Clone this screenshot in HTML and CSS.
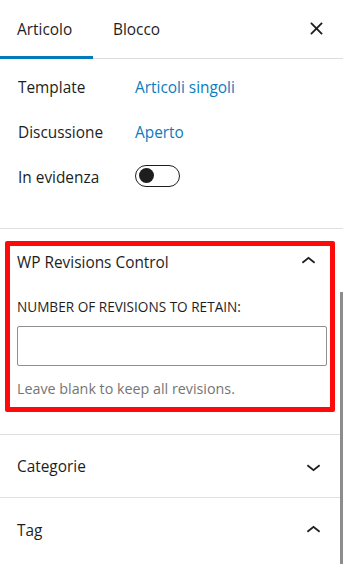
FILE: index.html
```html
<!DOCTYPE html>
<html lang="it">
<head>
<meta charset="utf-8">
<title>Impostazioni</title>
<link rel="stylesheet" href="styles.css">
</head>
<body>
<div class="sidebar">
  <div class="tabs">
    <div class="tab active">Articolo</div>
    <div class="tab second">Blocco</div>
    <div class="close" aria-label="Chiudi">
      <svg width="14" height="14" viewBox="0 0 14 14"><path d="M1 1L13 13M13 1L1 13" stroke="#1e1e1e" stroke-width="2" fill="none"/></svg>
    </div>
  </div>

  <div class="summary">
    <div class="row"><span class="label">Template</span><span class="value">Articoli singoli</span></div>
    <div class="row"><span class="label">Discussione</span><span class="value">Aperto</span></div>
    <div class="row"><span class="label">In evidenza</span><span class="toggle"><span class="knob"></span></span></div>
  </div>

  <div class="panel-section">
    <div class="highlight">
      <div class="panel-header">
        <span>WP Revisions Control</span>
        <svg class="chev" width="29" height="29" viewBox="0 0 24 24"><path d="M6.5 12.4L12 8l5.5 4.4-.9 1.2L12 10l-4.6 3.6-.9-1.2z" fill="#1e1e1e"/></svg>
      </div>
      <div class="field-label">NUMBER OF REVISIONS TO RETAIN:</div>
      <div class="input"></div>
      <div class="help">Leave blank to keep all revisions.</div>
    </div>
  </div>

  <div class="section cat">
    <span>Categorie</span>
    <svg class="chev" width="29" height="29" viewBox="0 0 24 24"><path d="M17.5 11.6L12 16l-5.5-4.4.9-1.2L12 14l4.6-3.6.9 1.2z" fill="#1e1e1e"/></svg>
  </div>
  <div class="section tag">
    <span>Tag</span>
    <svg class="chev" width="29" height="29" viewBox="0 0 24 24"><path d="M6.5 12.4L12 8l5.5 4.4-.9 1.2L12 10l-4.6 3.6-.9-1.2z" fill="#1e1e1e"/></svg>
  </div>
  <div class="scrollbar"></div>
</div>
</body>
</html>
```
FILE: styles.css
```css
html, body {
  margin: 0;
  padding: 0;
  background: #fff;
}
body {
  font-family: "Open Sans", "Noto Sans", sans-serif;
  font-size: 15.4px;
  color: #1e1e1e;
  overflow: hidden;
}
.sidebar {
  position: relative;
  width: 343px;
  height: 564px;
  overflow: hidden;
}
.tabs {
  display: flex;
  align-items: stretch;
  height: 58px;
  border-bottom: 1px solid #dddddd;
}
.tab {
  display: flex;
  align-items: center;
  padding: 0 17px;
  margin-bottom: -1px;
  padding-bottom: 1px;
}
.tab.active {
  width: 59px;
  box-shadow: inset 0 -3px 0 #007cba;
}
.tab.second {
  padding-left: 20px;
}
.close {
  margin-left: auto;
  width: 48px;
  display: flex;
  align-items: center;
  justify-content: center;
  margin-right: 3px;
  padding-bottom: 1px;
}
.close svg {
  width: 13px;
  height: 13px;
}
.summary {
  display: flex;
  flex-direction: column;
  gap: 10px;
  padding: 11px 0 33px 18px;
  border-bottom: 1px solid #e0e0e0;
}
.row {
  display: flex;
  align-items: center;
  height: 35px;
}
.label {
  width: 117px;
  flex: none;
}
.value {
  color: #0a7cc0;
}
.toggle {
  box-sizing: border-box;
  width: 45px;
  height: 22px;
  border: 1.5px solid #1e1e1e;
  border-radius: 11px;
  display: flex;
  align-items: center;
  padding-left: 3px;
  margin-top: -4px;
}
.knob {
  width: 15px;
  height: 15px;
  border-radius: 50%;
  background: #1e1e1e;
}
.panel-section {
  padding: 12px 8px 22px 5px;
  border-bottom: 1px solid #e0e0e0;
}
.highlight {
  border: 5px solid #ff0a0a;
  border-radius: 2px;
  padding: 0 3px 8px 7px;
}
.panel-header {
  display: flex;
  align-items: center;
  justify-content: space-between;
  height: 32px;
}
.panel-header .chev {
  margin-right: 4px;
  margin-top: -2px;
}
.field-label {
  margin-top: 20px;
  font-size: 13.6px;
  line-height: 18px;
  text-transform: uppercase;
}
.input {
  margin-top: 10px;
  height: 40px;
  box-sizing: border-box;
  border: 1px solid #8f8f8f;
  border-radius: 2px;
}
.help {
  margin-top: 12px;
  font-size: 14.3px;
  line-height: 21px;
  color: #757575;
}
.section {
  display: flex;
  align-items: center;
  justify-content: space-between;
  padding: 0 17px 0 17px;
}
.section .chev {
  margin-right: -2px;
}
.cat {
  height: 62px;
  border-bottom: 1px solid #e0e0e0;
}
.tag {
  height: 65px;
}
.scrollbar {
  position: absolute;
  right: 0;
  top: 292px;
  width: 3px;
  height: 272px;
  background: #8c8c8c;
}
```
